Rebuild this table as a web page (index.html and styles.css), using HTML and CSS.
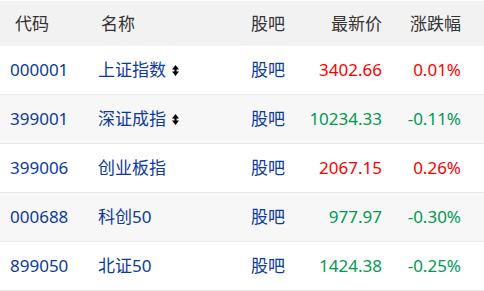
FILE: index.html
```html
<!DOCTYPE html>
<html lang="zh-CN">
<head>
<meta charset="utf-8">
<link rel="stylesheet" href="styles.css">
</head>
<body>
<div class="table">
  <div class="row head">
    <div class="c code h1">代码</div>
    <div class="c name h2">名称</div>
    <div class="c guba">股吧</div>
    <div class="c price">最新价</div>
    <div class="c pct">涨跌幅</div>
  </div>
  <div class="row">
    <div class="c code">000001</div>
    <div class="c name">上证指数<svg class="sort" viewBox="0 0 7 11" width="7" height="11"><path d="M3.5 0 L7 4.5 L4.6 4.5 L4.6 6.5 L7 6.5 L3.5 11 L0 6.5 L2.4 6.5 L2.4 4.5 L0 4.5 Z" fill="#000"/></svg></div>
    <div class="c guba">股吧</div>
    <div class="c price up">3402.66</div>
    <div class="c pct up">0.01%</div>
  </div>
  <div class="row alt">
    <div class="c code">399001</div>
    <div class="c name">深证成指<svg class="sort" viewBox="0 0 7 11" width="7" height="11"><path d="M3.5 0 L7 4.5 L4.6 4.5 L4.6 6.5 L7 6.5 L3.5 11 L0 6.5 L2.4 6.5 L2.4 4.5 L0 4.5 Z" fill="#000"/></svg></div>
    <div class="c guba">股吧</div>
    <div class="c price down">10234.33</div>
    <div class="c pct down">-0.11%</div>
  </div>
  <div class="row">
    <div class="c code">399006</div>
    <div class="c name">创业板指</div>
    <div class="c guba">股吧</div>
    <div class="c price up">2067.15</div>
    <div class="c pct up">0.26%</div>
  </div>
  <div class="row alt">
    <div class="c code">000688</div>
    <div class="c name">科创50</div>
    <div class="c guba">股吧</div>
    <div class="c price down">977.97</div>
    <div class="c pct down">-0.30%</div>
  </div>
  <div class="row">
    <div class="c code">899050</div>
    <div class="c name">北证50</div>
    <div class="c guba">股吧</div>
    <div class="c price down">1424.38</div>
    <div class="c pct down">-0.25%</div>
  </div>
</div>
</body>
</html>
```
FILE: styles.css
```css
html, body {
  margin: 0;
  padding: 0;
  background: #fff;
}
body {
  font-family: "Noto Sans", "Noto Sans CJK SC", sans-serif;
  font-size: 17px;
}
.table {
  width: 484px;
  padding-top: 1px;
}
.row {
  display: grid;
  grid-template-columns: 88px 153px 50px 81px 79px;
  padding-left: 10px;
  height: 48px;
  align-items: center;
  border-bottom: 1px solid #e8e8e8;
  color: #0c3a9e;
}
.row.head {
  height: 45px;
  background: #f2f2f2;
  color: #333;
  border-bottom: none;
}
.row.alt {
  background: #f7f7f7;
}
.c {
  white-space: nowrap;
  display: flex;
  align-items: center;
  line-height: 24px;
}
.h1 { padding-left: 5px; }
.h2 { padding-left: 3px; }
.price, .pct {
  justify-content: flex-end;
}
.up { color: #ff0000; }
.down { color: #009a50; }
.sort {
  margin-left: 6px;
}
```
